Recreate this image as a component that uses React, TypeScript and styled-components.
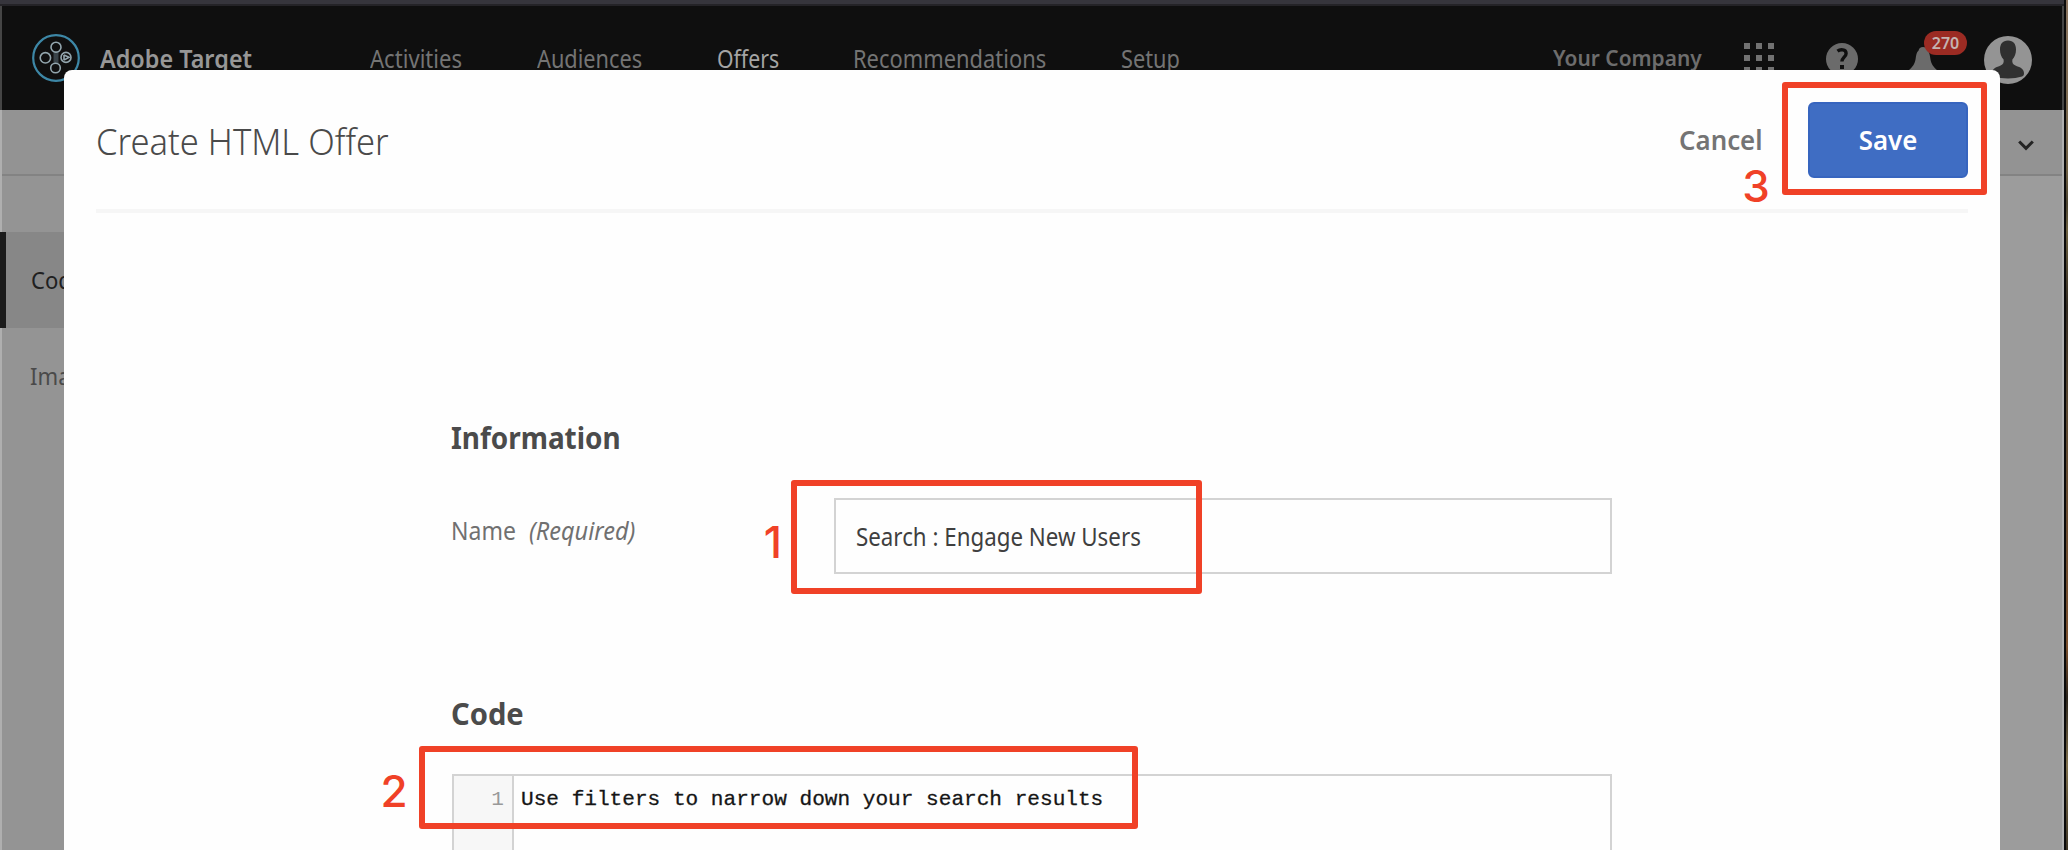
import React from "react";
import styled, { createGlobalStyle, css } from "styled-components";

const GlobalStyle = createGlobalStyle`
  * { box-sizing: border-box; }
  body { margin: 0; background: #9c9c9c; overflow: hidden; }
`;

const RED = "#f04127";

/* Condenses a label: $ratio narrows the glyphs, $trim removes the freed space. */
const condensed = css<{ $ratio: number; $trim: number }>`
  display: inline-block;
  white-space: nowrap;
  transform: scaleX(${(p) => p.$ratio});
  transform-origin: left center;
  margin-right: ${(p) => -p.$trim}px;
`;

const Screen = styled.div`
  position: relative;
  display: flex;
  width: 2068px;
  height: 850px;
  overflow: hidden;
  font-family: "Noto Sans", "Liberation Sans", sans-serif;
`;

const WindowFrame = styled.div`
  display: flex;
  flex-direction: column;
  width: 2064px;
  height: 850px;
  border-left: 2px solid rgba(255, 255, 255, 0.2);
  border-right: 2px solid rgba(255, 255, 255, 0.2);
  background: #9c9c9c;
`;

const WindowEdge = styled.div`
  width: 2px;
  background: #0b0b0b;
`;

const DesktopStrip = styled.div`
  width: 2px;
  background: linear-gradient(#8b7560, #6f6044 20%, #4b4330 24%, #6d6141 27%, #332c22 36%, #5c4a33 48%, #7b4f2c 76%, #2b241b 82%, #80704c 90%, #3c3425);
`;

const TitleStrip = styled.div`
  height: 6px;
  margin: 0 -2px;
  background: #36353c;
  border-bottom: 2px solid #242327;
`;

const TopBar = styled.header`
  display: flex;
  align-items: center;
  height: 104px;
  margin: 0 -2px;
  padding: 0 30px 0 30px;
  background: #0f0f0f;
  border-left: 2px solid #454545;
  border-right: 2px solid #454545;
`;

const Brand = styled.span`
  ${condensed}
  margin-left: 20px;
  color: #979797;
  font-size: 26px;
  font-weight: 600;
  line-height: 36px;
`;

const Nav = styled.nav`
  display: flex;
  flex: 1;
  gap: 74px;
  margin-left: 117px;
`;

const NavLink = styled.a<{ $ratio: number; $trim: number; $active?: boolean }>`
  ${condensed}
  color: ${(p) => (p.$active ? "#a5a5a5" : "#747474")};
  font-size: 25px;
  line-height: 36px;
`;

const Company = styled.span`
  ${condensed}
  color: #6d6d6d;
  font-size: 22px;
  font-weight: 600;
  line-height: 34px;
  margin-top: -2px;
`;

const Tools = styled.div`
  display: flex;
  align-items: center;
  height: 48px;
  margin-left: 42px;
`;

const HelpSlot = styled.div`
  display: flex;
  margin: 2px 0 0 52px;
`;

const BellSlot = styled.div`
  position: relative;
  display: flex;
  margin: 9px 0 0 50px;
`;

const Badge = styled.span`
  position: absolute;
  left: 16px;
  top: -16px;
  width: 43px;
  height: 24px;
  border-radius: 12px;
  background: #9b2b23;
  color: #c4b3b1;
  font-size: 16px;
  font-weight: 600;
  line-height: 24px;
  text-align: center;
`;

const AvatarSlot = styled.div`
  display: flex;
  margin: 4px 0 0 46px;
`;

const SubBar = styled.div`
  display: flex;
  align-items: center;
  justify-content: flex-end;
  height: 66px;
  padding: 6px 28px 0 0;
  background: #939393;
  border-bottom: 2px solid #838383;
`;

const Sidebar = styled.aside`
  display: flex;
  flex-direction: column;
  width: 300px;
  flex: 1;
  padding-top: 56px;
  background: #949494;
`;

const SideItem = styled.div<{ $selected?: boolean }>`
  height: 96px;
  margin-left: -2px;
  padding-left: ${(p) => (p.$selected ? 25 : 30)}px;
  border-left: ${(p) => (p.$selected ? "6px solid #1b1b1b" : "0")};
  background: ${(p) => (p.$selected ? "#878787" : "transparent")};
  color: ${(p) => (p.$selected ? "#202020" : "#4a4a4a")};
  font-size: 24px;
  line-height: 96px;
`;

const SideLabel = styled.span`
  ${condensed}
`;

const Modal = styled.section`
  position: absolute;
  left: 64px;
  top: 70px;
  width: 1936px;
  height: 800px;
  padding: 0 32px;
  border-radius: 8px;
  background: #fefefe;
`;

const ModalHeader = styled.div`
  display: flex;
  align-items: center;
  height: 143px;
  border-bottom: 4px solid #f6f6f6;
`;

const ModalTitle = styled.h1`
  ${condensed}
  margin-top: 3px;
  margin-bottom: 0;
  color: #4a4a4a;
  font-size: 37px;
  font-weight: 300;
  line-height: 50px;
`;

const Actions = styled.div`
  display: flex;
  align-items: center;
  margin: 0 0 0 auto;
`;

const CancelButton = styled.button`
  margin-right: 44px;
  padding: 0;
  border: 0;
  background: none;
  color: #747474;
  font: 600 26.5px/40px "Noto Sans", sans-serif;
`;

const SaveButton = styled.button`
  width: 160px;
  height: 76px;
  padding: 0;
  border: 2px solid #3765bf;
  border-radius: 6px;
  background: #3f6dc3;
  color: #fff;
  font: 600 26.5px/40px "Noto Sans", sans-serif;
`;

const ButtonText = styled.span`
  display: inline-block;
  transform: scaleX(0.975);
`;

const Form = styled.div`
  width: 1160px;
  margin-left: 356px;
  padding-top: 199px;
`;

const SectionTitle = styled.h2`
  ${condensed}
  display: block;
  width: max-content;
  margin-top: 0;
  margin-bottom: 0;
  margin-left: -1px;
  color: #4b4b4b;
  font-size: 31px;
  font-weight: 700;
  line-height: 50px;
`;

const FieldRow = styled.div`
  display: flex;
  align-items: flex-start;
  margin-top: 36px;
  height: 190px;
`;

const FieldLabel = styled.label`
  display: flex;
  width: 383px;
  margin-left: -1px;
  padding-top: 14px;
  color: #707070;
  font-size: 25px;
  line-height: 36px;
`;

const LabelText = styled.span`
  ${condensed}
`;

const Hint = styled.em`
  ${condensed}
  margin-left: 13px;
`;

const NameField = styled.div`
  width: 778px;
  height: 76px;
  padding-left: 20px;
  border: 2px solid #d3d3d3;
  color: #3f3f3f;
  font-size: 25px;
  line-height: 72px;
`;

const Editor = styled.div`
  display: flex;
  height: 120px;
  margin-top: 36px;
  border: 2px solid #d3d3d3;
  font-family: "Liberation Mono", monospace;
  font-size: 21.1px;
  line-height: 24px;
`;

const Gutter = styled.div`
  width: 60px;
  padding: 11px 8px 0 0;
  border-right: 2px solid #d3d3d3;
  background: #f7f7f7;
  color: #999;
  text-align: right;
`;

const CodeLine = styled.code`
  padding: 11px 0 0 7px;
  color: #151515;
  font-family: inherit;
  -webkit-text-stroke: 0.3px #151515;
  white-space: pre;
`;

/* Annotations lie freely on top of the screen. */
const Callout = styled.div<{ $x: number; $y: number; $w: number; $h: number }>`
  position: absolute;
  left: ${(p) => p.$x}px;
  top: ${(p) => p.$y}px;
  width: ${(p) => p.$w}px;
  height: ${(p) => p.$h}px;
  border: 6px solid ${RED};
  border-radius: 3px;
`;

const Step = styled.span<{ $x: number; $y: number }>`
  position: absolute;
  left: ${(p) => p.$x}px;
  top: ${(p) => p.$y}px;
  width: 28px;
  height: 46px;
  background: #fefefe;
  color: ${RED};
  font: 450 44px/46px Inter, sans-serif;
  text-align: center;
`;

const Logo = () => (
  <svg width="48" height="48" viewBox="0 0 48 48" fill="none">
    <circle cx="24" cy="24" r="22.8" stroke="#3d87a6" strokeWidth="2.2" />
    <rect x="21.5" y="17" width="5" height="13" fill="#394349" />
    <g stroke="#93a6ae" strokeWidth="1.6">
      <circle cx="24" cy="13.2" r="5" />
      <circle cx="13.4" cy="23.8" r="5.2" />
      <circle cx="23.5" cy="34" r="4.8" />
      <circle cx="34" cy="23.4" r="5" />
      <path d="M32 21l5 2.4-5 2.6M32 21v5" />
    </g>
  </svg>
);

const AppsIcon = () => (
  <svg width="30" height="30" fill="#727272">
    {[0, 12, 24].map((y) => [0, 12, 24].map((x) => <rect key={`${x}-${y}`} x={x} y={y} width="6" height="6" />))}
  </svg>
);

const HelpIcon = () => (
  <svg width="32" height="32" viewBox="0 0 32 32" fill="none">
    <circle cx="16" cy="16" r="16" fill="#6b6b6b" />
    <path d="M11.500 8.200c2.600-2 8.600-2.200 8.600 2.200 0 3.600-4.200 4-4.200 8.200" stroke="#0f0f0f" strokeWidth="3.4" />
    <rect x="14" y="22" width="4" height="4" fill="#0f0f0f" />
  </svg>
);

const BellIcon = () => (
  <svg width="30" height="32" viewBox="0 0 30 32" fill="#6b6b6b">
    <path d="M15 0c-2.600 0-4 1.600-4.400 3.400C8.400 5 8.200 8 7.600 12 6.800 17 4.500 20 0 24v3h30v-3c-4.500-4-6.800-7-7.600-12-.6-4-.8-7-3-8.600C19 1.600 17.600 0 15 0z" />
    <path d="M11 28h8a4 4 0 0 1-8 0z" />
  </svg>
);

const AvatarIcon = () => (
  <svg width="48" height="48" viewBox="0 0 48 48">
    <circle cx="24" cy="24" r="24" fill="#949494" />
    <path
      d="M24 4.500c5.500 0 8 3.800 8 9 0 4-1.200 7.500-3.600 10-.5 3 .3 4.800 3 6 4 1.800 8.200 2.600 8.600 7.500.1 2-.5 3-2 3.600-8 2.500-20 2.500-28 0-1.500-.6-2.100-1.600-2-3.600.4-4.900 4.600-5.700 8.600-7.500 2.700-1.200 3.500-3 3-6-2.400-2.500-3.600-6-3.600-10 0-5.200 2.500-9 8-9z"
      fill="#303030"
    />
  </svg>
);

const ChevronIcon = () => (
  <svg width="16" height="11" fill="none" stroke="#242424" strokeWidth="3">
    <path d="M1.200 1.500L8 8.300l6.800-6.800" />
  </svg>
);

const navItems = [
  { label: "Activities", ratio: 0.884, trim: 11 },
  { label: "Audiences", ratio: 0.87, trim: 15 },
  { label: "Offers", ratio: 0.85, trim: 11 },
  { label: "Recommendations", ratio: 0.876, trim: 27 },
  { label: "Setup", ratio: 0.87, trim: 8 },
];

export default function App() {
  return (
    <Screen>
      <GlobalStyle />
      <WindowFrame>
        <TitleStrip />
        <TopBar>
          <Logo />
          <Brand $ratio={0.9} $trim={16}>Adobe Target</Brand>
          <Nav>
            {navItems.map((item) => (
              <NavLink key={item.label} $ratio={item.ratio} $trim={item.trim} $active={item.label === "Offers"}>
                {item.label}
              </NavLink>
            ))}
          </Nav>
          <Company $ratio={0.95} $trim={8}>Your Company</Company>
          <Tools>
            <AppsIcon />
            <HelpSlot><HelpIcon /></HelpSlot>
            <BellSlot>
              <BellIcon />
              <Badge>270</Badge>
            </BellSlot>
            <AvatarSlot><AvatarIcon /></AvatarSlot>
          </Tools>
        </TopBar>
        <SubBar><ChevronIcon /></SubBar>
        <Sidebar>
          <SideItem $selected><SideLabel $ratio={0.92} $trim={0}>Code Offers</SideLabel></SideItem>
          <SideItem><SideLabel $ratio={0.92} $trim={0}>Image Offers</SideLabel></SideItem>
        </Sidebar>
      </WindowFrame>
      <WindowEdge />
      <DesktopStrip />

      <Modal>
        <ModalHeader>
          <ModalTitle $ratio={0.934} $trim={17}>Create HTML Offer</ModalTitle>
          <Actions>
            <CancelButton><ButtonText>Cancel</ButtonText></CancelButton>
            <SaveButton><ButtonText>Save</ButtonText></SaveButton>
          </Actions>
        </ModalHeader>
        <Form>
          <SectionTitle $ratio={0.9} $trim={0}>Information</SectionTitle>
          <FieldRow>
            <FieldLabel>
              <LabelText $ratio={0.92} $trim={6}>Name</LabelText>
              <Hint $ratio={0.94} $trim={8}>(Required)</Hint>
            </FieldLabel>
            <NameField>
              <LabelText $ratio={0.893} $trim={0}>Search : Engage New Users</LabelText>
            </NameField>
          </FieldRow>
          <SectionTitle $ratio={0.94} $trim={0}>Code</SectionTitle>
          <Editor>
            <Gutter>1</Gutter>
            <CodeLine>Use filters to narrow down your search results</CodeLine>
          </Editor>
        </Form>
      </Modal>

      <Step $x={759} $y={519}>1</Step>
      <Callout $x={791} $y={480} $w={411} $h={114} />
      <Step $x={380} $y={768}>2</Step>
      <Callout $x={419} $y={746} $w={719} $h={83} />
      <Step $x={1742} $y={163}>3</Step>
      <Callout $x={1782} $y={82} $w={205} $h={113} />
    </Screen>
  );
}
